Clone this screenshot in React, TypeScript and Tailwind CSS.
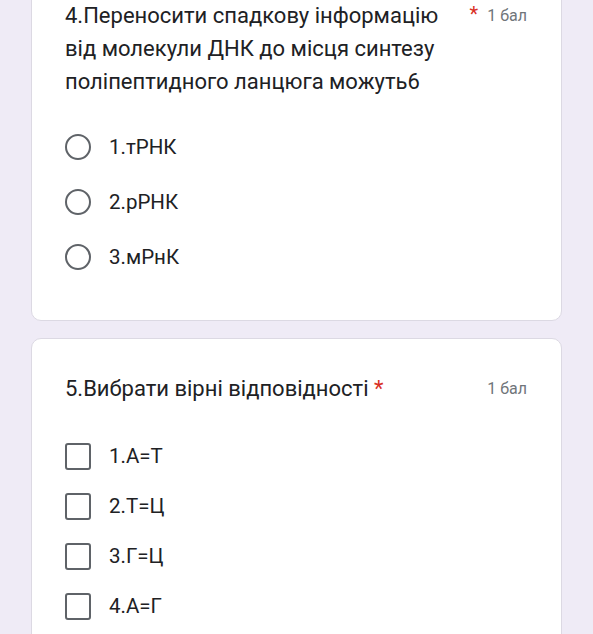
import React from "react";

function Radio() {
  return <span className="block w-[26px] h-[26px] rounded-full border-[2.5px] border-[#5f6368] shrink-0" />;
}
function Check() {
  return <span className="block w-[26px] h-[27px] rounded-[3px] border-[2.5px] border-[#5f6368] shrink-0" />;
}

export default function App() {
  const radios = ["1.тРНК", "2.рРНК", "3.мРнК"];
  const checks = ["1.А=Т", "2.Т=Ц", "3.Г=Ц", "4.А=Г"];
  return (
    <div className="w-[593px] h-[634px] overflow-hidden bg-[#efebf6] text-[#202124]" style={{ fontFamily: "Roboto, 'Noto Sans', sans-serif" }}>
      <div className="mx-[31px] -mt-[24px] bg-white rounded-[10px] border border-[#dcd9e3] pl-[33px] pr-[34px] pt-[22px] pb-[50px]">
        <div className="flex items-start">
          <div className="w-[395px] text-[22px] leading-[33px]">4.Переносити спадкову інформацію від молекули ДНК до місця синтезу поліпептидного ланцюга можуть6</div>
          <span className="ml-auto text-[#d93025] text-[20px] leading-[30px]">*</span>
          <span className="ml-[9px] text-[16px] leading-[33px] text-[#70757a]">1 бал</span>
        </div>
        <div className="mt-[36px] flex flex-col gap-[29px]">
          {radios.map((r) => (
            <div key={r} className="flex items-center h-[26px]">
              <Radio />
              <span className="ml-[18px] text-[20.5px]">{r}</span>
            </div>
          ))}
        </div>
      </div>
      <div className="mx-[31px] mt-[17px] bg-white rounded-[10px] border border-[#dcd9e3] pl-[33px] pr-[34px] pt-[33px] pb-[40px]">
        <div className="flex items-start">
          <div className="text-[22px] leading-[33px]">
            5.Вибрати вірні відповідності <span className="text-[#d93025]">*</span>
          </div>
          <span className="ml-auto text-[16px] leading-[33px] text-[#70757a]">1 бал</span>
        </div>
        <div className="mt-[38px] flex flex-col gap-[23px]">
          {checks.map((r) => (
            <div key={r} className="flex items-center h-[27px]">
              <Check />
              <span className="ml-[18px] text-[20.5px]">{r}</span>
            </div>
          ))}
        </div>
      </div>
    </div>
  );
}
